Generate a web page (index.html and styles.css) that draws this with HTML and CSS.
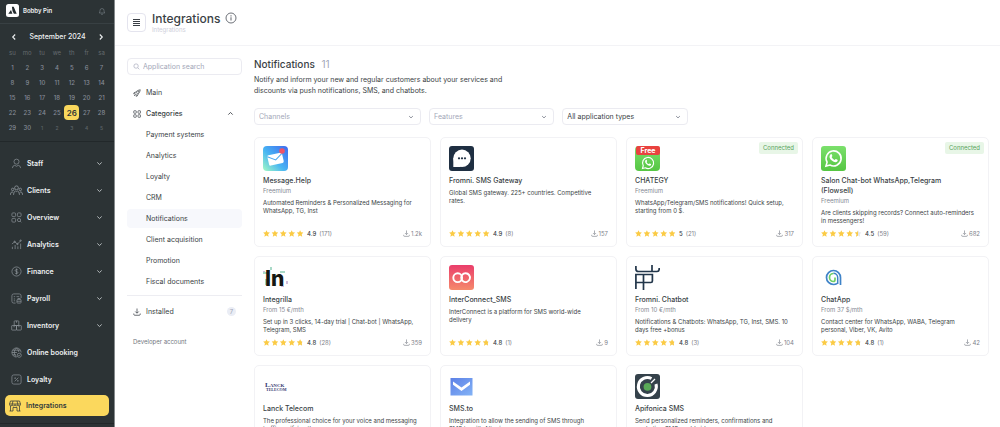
FILE: index.html
```html
<!DOCTYPE html>
<html lang="en">
<head>
<meta charset="utf-8">
<title>Integrations</title>
<link rel="stylesheet" href="styles.css">
</head>
<body>
<svg class="defs" aria-hidden="true">
  <symbol id="star" viewBox="0 0 10 10"><path d="M5 .3 6.4 3.3 9.8 3.7 7.3 6 8 9.5 5 7.8 2 9.5 2.7 6 .2 3.7 3.6 3.3Z"/></symbol>
  <symbol id="stars4" viewBox="0 0 41 7"><g fill="#fbcb45"><use href="#star" width="7" height="7"/><use href="#star" x="8.4" width="7" height="7"/><use href="#star" x="16.8" width="7" height="7"/><use href="#star" x="25.2" width="7" height="7"/></g></symbol>
  <clipPath id="clip48"><rect x="33" width="6.1" height="7"/></clipPath>
  <clipPath id="clip45"><rect x="33" width="4.1" height="7"/></clipPath>
  <symbol id="r50" viewBox="0 0 41 7"><use href="#stars4" width="41" height="7"/><use href="#star" x="33.6" width="7" height="7" fill="#fbcb45"/></symbol>
  <symbol id="r48" viewBox="0 0 41 7"><use href="#stars4" width="41" height="7"/><use href="#star" x="33.6" width="7" height="7" fill="#eceef2"/><g clip-path="url(#clip48)"><use href="#star" x="33.6" width="7" height="7" fill="#fbcb45"/></g></symbol>
  <symbol id="r45" viewBox="0 0 41 7"><use href="#stars4" width="41" height="7"/><use href="#star" x="33.6" width="7" height="7" fill="#e4e6ec"/><g clip-path="url(#clip45)"><use href="#star" x="33.6" width="7" height="7" fill="#fbcb45"/></g></symbol>
  <symbol id="dl" viewBox="0 0 16 16"><path d="M8 1v9M4.5 7 8 10.5 11.500 7M1.500 11v1.500q0 2 2 2h9q2 0 2-2V11" fill="none" stroke="currentColor" stroke-width="1.500"/></symbol>
  <symbol id="down" viewBox="0 0 8 8"><path d="m1.500 2.800 2.500 2.400 2.500-2.400" fill="none" stroke="currentColor" stroke-width="1.100"/></symbol>
  <symbol id="wa" viewBox="0 0 24 24"><path d="M2.500 21.500 3.900 16.600A9.500 9.500 0 1 1 7.500 20.200Z" fill="none" stroke="#fff" stroke-width="2"/><path d="M8.500 6.500c.8-.3 1.200 0 1.400.6l.6 1.500c.2.700-.9 1.500-.8 1.900.7 1.500 1.900 2.600 3.500 3.400.6.200 1.200-1.500 1.900-1.200l1.900.9c.7.400.1 2-.6 2.600-2.200 1.500-5.400-.4-7.300-2.300S5.800 8.700 8.500 6.500Z" fill="#fff"/></symbol>
  <linearGradient id="gWa" x2="0" y2="1"><stop stop-color="#7be06c"/><stop offset="1" stop-color="#56c643"/></linearGradient>
  <linearGradient id="gMsg" x1="0" y1="1" x2="1" y2="0"><stop stop-color="#a4fbc4"/><stop offset=".45" stop-color="#48b5f3"/><stop offset="1" stop-color="#3f68ef"/></linearGradient>
  <linearGradient id="gInter" x2="0" y2="1"><stop stop-color="#ea3d6b"/><stop offset="1" stop-color="#f58a6c"/></linearGradient>
  <linearGradient id="gSms" x2="1" y2="1"><stop stop-color="#5c80e6"/><stop offset="1" stop-color="#83b3f6"/></linearGradient>
</svg>
<div class="app">
  <aside class="sidebar">
    <div class="profile">
      <svg class="logo" viewBox="0 0 13 13"><rect width="13" height="13" rx="2.500" fill="#fff"/><path d="M5.900 2.800h1.800l3 7H7.900L6.500 7Z" fill="#222a2d"/><path d="m5 6 1.400 3.800H2.300Z" fill="#222a2d"/></svg>
      <strong class="profile-name">Bobby Pin</strong>
      <svg class="bell" viewBox="0 0 16 16"><path d="M2.500 12h11q-1.500-1.500-1.500-5a4 4 0 0 0-8 0q0 3.500-1.500 5ZM6 14.500h4" fill="none" stroke="currentColor" stroke-width="1.300"/></svg>
    </div>
    <div class="calendar">
      <div class="month">
        <button aria-label="Previous month"><svg viewBox="0 0 8 8"><path d="M5.200 1.500 2.700 4l2.500 2.500" fill="none" stroke="currentColor" stroke-width="1.100"/></svg></button>
        <span>September 2024</span>
        <button aria-label="Next month"><svg viewBox="0 0 8 8"><path d="M2.800 1.500 5.300 4 2.800 6.500" fill="none" stroke="currentColor" stroke-width="1.100"/></svg></button>
      </div>
      <table class="days">
        <thead><tr><th>su</th><th>mo</th><th>tu</th><th>we</th><th>th</th><th>fr</th><th>sa</th></tr></thead>
        <tbody>
          <tr><td>1</td><td>2</td><td>3</td><td>4</td><td>5</td><td>6</td><td>7</td></tr>
          <tr><td>8</td><td>9</td><td>10</td><td>11</td><td>12</td><td>13</td><td>14</td></tr>
          <tr><td>15</td><td>16</td><td>17</td><td>18</td><td>19</td><td>20</td><td>21</td></tr>
          <tr><td>22</td><td>23</td><td>24</td><td>25</td><td class="today">26</td><td>27</td><td>28</td></tr>
          <tr><td>29</td><td>30</td><td class="other">1</td><td class="other">2</td><td class="other">3</td><td class="other">4</td><td class="other">5</td></tr>
        </tbody>
      </table>
    </div>
    <nav class="nav">
      <a href="#"><svg class="ico" viewBox="0 0 24 24"><circle cx="12" cy="8" r="5.500"/><path d="M3 22q0-5 5-6l4 2 4-2q5 1 5 6"/></svg>Staff<svg class="chev"><use href="#down"/></svg></a>
      <a href="#"><svg class="ico wide" viewBox="0 0 24 24"><circle cx="12" cy="7" r="3.500"/><path d="M6.500 20q0-6 3.500-7l2 1 2-1q3.500 1 3.500 7"/><circle cx="5" cy="10" r="2.300"/><circle cx="19" cy="10" r="2.300"/><path d="M.8 20q0-5 3-5.500l2 1M23.200 20q0-5-3-5.500l-2 1"/></svg>Clients<svg class="chev"><use href="#down"/></svg></a>
      <a href="#"><svg class="ico" viewBox="0 0 24 24"><rect x="2" y="2" width="8" height="8" rx="2"/><rect x="14" y="2" width="8" height="8" rx="2"/><rect x="2" y="14" width="8" height="8" rx="2"/><circle cx="17.500" cy="17.500" r="3.500"/><path d="m20 20 2.500 2.500"/></svg>Overview<svg class="chev"><use href="#down"/></svg></a>
      <a href="#"><svg class="ico" viewBox="0 0 24 24"><path d="M3 22v-5M9 22v-9M15 22v-6M21 22V10M2 11l6-5 6 5 8-8"/><circle cx="8" cy="6" r="1.500"/><circle cx="14" cy="11" r="1.500"/><circle cx="21" cy="3.500" r="1.500"/></svg>Analytics<svg class="chev"><use href="#down"/></svg></a>
      <a href="#"><svg class="ico" viewBox="0 0 24 24"><circle cx="12" cy="12" r="10"/><path d="M15 9q-1-1.500-3-1.500T9 9.700q0 1.800 3 2.300t3 2.300q0 2.200-3 2.200T9 15M12 5.500v13"/></svg>Finance<svg class="chev"><use href="#down"/></svg></a>
      <a href="#"><svg class="ico" viewBox="0 0 24 24"><path d="M10 22H6q-4 0-4-4V6q0-4 4-4h12q4 0 4 4v5M6 8h3M12 8h6M6 13h3M6 17h3"/><rect x="13" y="14" width="9" height="8" rx="1.500"/><path d="M15 14v-2h5v2M13 18h9"/></svg>Payroll<svg class="chev"><use href="#down"/></svg></a>
      <a href="#"><svg class="ico" viewBox="0 0 24 24"><rect x="7" y="2" width="10" height="10" rx="1"/><rect x="1.500" y="12" width="10.500" height="10" rx="1"/><rect x="12" y="12" width="10.500" height="10" rx="1"/><path d="M12 2v4M6.700 12v4M17.300 12v4"/></svg>Inventory<svg class="chev"><use href="#down"/></svg></a>
      <a href="#"><svg class="ico" viewBox="0 0 24 24"><path d="M12 22A10 10 0 1 1 22 12M12 22Q7 18 7 12t5-10q5 4 5 9M2 12h11M3.500 7h17M3.500 17H11"/><circle cx="18" cy="18" r="4.500"/><path d="m16 18 1.500 1.500 2.500-3"/></svg>Online booking</a>
      <a href="#"><svg class="ico" viewBox="0 0 24 24"><rect x="2" y="2" width="20" height="20" rx="4"/><path d="m8 16 8-8"/><circle cx="9" cy="9" r="1"/><circle cx="15" cy="15" r="1"/></svg>Loyalty</a>
      <a href="#" class="active" aria-current="page"><svg class="ico" viewBox="0 0 24 24"><path d="M3 2h18l2 6v1a2.700 2.700 0 0 1-5.500 0 2.700 2.700 0 0 1-5.500 0 2.700 2.700 0 0 1-5.500 0A2.700 2.700 0 0 1 1 9V8ZM1 8h22M8 2 6.500 8M16 2l1.500 6M3 12v10M21 12v10M8 22v-7h8v7M1 22h7M16 22h7"/></svg>Integrations</a>
    </nav>
    <div class="sidebar-end"></div>
  </aside>
  <main class="main">
    <header class="topbar">
      <button class="menu" aria-label="Menu"><svg viewBox="0 0 9 9"><path d="M1 1.500h7M1 3.500h7M1 5.500h7M1 7.500h7" stroke="currentColor" stroke-width="1"/></svg></button>
      <div class="titles">
        <div class="title-line"><h1>Integrations</h1><svg class="info" viewBox="0 0 12 12"><circle cx="6" cy="6" r="5" fill="none" stroke="currentColor"/><path d="M6 5.300v3.200M6 3.200v1.200" stroke="currentColor" stroke-width="1.100"/></svg></div>
        <span class="crumb">Integrations</span>
      </div>
    </header>
    <div class="body">
      <section class="side">
        <label class="search"><svg viewBox="0 0 16 16"><circle cx="7" cy="7" r="5" fill="none" stroke="currentColor" stroke-width="1.500"/><path d="m11 11 3.500 3.500" stroke="currentColor" stroke-width="1.500"/></svg><input type="text" placeholder="Application search" aria-label="Application search"></label>
        <nav class="cats">
          <a href="#"><svg class="cico" viewBox="0 0 16 16"><path d="M14.500 1.500Q9 2 5.500 6L2 7.500 1.500 10l3-.5 2 2-.5 3 2.500-.5L10 10.500q4-3.500 4.500-9ZM5.500 6l4.500 4.500M2 14l3-3"/><circle cx="10.500" cy="5.500" r="1"/></svg>Main</a>
          <a href="#" class="group"><svg class="cico" viewBox="0 0 16 16"><rect x="1.500" y="1.500" width="5" height="5" rx="1"/><rect x="10" y="1.500" width="5" height="5" rx="1"/><rect x="1.500" y="9.500" width="5" height="5" rx="1"/><rect x="10" y="9.500" width="5" height="5" rx="1"/></svg>Categories<svg class="up" viewBox="0 0 8 8"><path d="m1.500 5.300 2.500-2.500 2.500 2.500" fill="none" stroke="currentColor"/></svg></a>
          <a href="#" class="sub">Payment systems</a>
          <a href="#" class="sub">Analytics</a>
          <a href="#" class="sub">Loyalty</a>
          <a href="#" class="sub">CRM</a>
          <a href="#" class="sub current">Notifications</a>
          <a href="#" class="sub">Client acquisition</a>
          <a href="#" class="sub">Promotion</a>
          <a href="#" class="sub">Fiscal documents</a>
        </nav>
        <div class="installed"><a href="#"><svg class="cico"><use href="#dl"/></svg>Installed<span class="count">7</span></a></div>
        <a href="#" class="dev">Developer account</a>
      </section>
      <section class="content">
        <h2>Notifications <span>11</span></h2>
        <p class="intro">Notify and inform your new and regular customers about your services and discounts via push notifications, SMS, and chatbots.</p>
        <div class="filters">
          <div class="filter"><select aria-label="Channels"><option>Channels</option></select><svg><use href="#down"/></svg></div>
          <div class="filter"><select aria-label="Features"><option>Features</option></select><svg><use href="#down"/></svg></div>
          <div class="filter chosen"><select aria-label="Application type"><option>All application types</option></select><svg><use href="#down"/></svg></div>
        </div>
        <div class="cards">
          <article class="card">
            <svg class="app-icon" viewBox="0 0 25 25"><rect width="25" height="25" rx="4" fill="url(#gMsg)"/><g transform="rotate(-13 12 13)"><rect x="5" y="8" width="15" height="10.500" rx="1.500" fill="#fff"/><path d="m5 9 7.500 5L20 9" fill="none" stroke="#4ea9ee" stroke-width="1"/></g><circle cx="19" cy="5" r="2.800" fill="#f05267"/></svg>
            <h3>Message.Help</h3><p class="price">Freemium</p>
            <p class="desc">Automated Reminders &amp; Personalized Messaging for WhatsApp, TG, Inst</p>
            <div class="meta"><svg class="stars"><use href="#r50"/></svg><b>4.9</b><span>(171)</span><span class="installs"><svg><use href="#dl"/></svg>1.2k</span></div>
          </article>
          <article class="card">
            <svg class="app-icon" viewBox="0 0 25 25"><rect width="25" height="25" rx="3" fill="#1f2f42"/><circle cx="13" cy="12.300" r="8.700" fill="#fff"/><path d="M4.300 12v9H12Z" fill="#fff"/><g fill="#1f2f42"><circle cx="10" cy="12.300" r="1.100"/><circle cx="13" cy="12.300" r="1.100"/><circle cx="16" cy="12.300" r="1.100"/></g></svg>
            <h3>Fromni. SMS Gateway</h3>
            <p class="desc">Global SMS gateway. 225+ countries. Competitive rates.</p>
            <div class="meta"><svg class="stars"><use href="#r50"/></svg><b>4.9</b><span>(8)</span><span class="installs"><svg><use href="#dl"/></svg>157</span></div>
          </article>
          <article class="card">
            <span class="badge">Connected</span>
            <svg class="app-icon" viewBox="0 0 25 25"><rect width="25" height="25" rx="4" fill="url(#gWa)"/><rect x="1" y="0" width="24" height="9" rx="2" fill="#e9423f"/><text class="free" x="13" y="7" text-anchor="middle">Free</text><use href="#wa" x="6" y="10" width="14" height="14"/></svg>
            <h3>CHATEGY</h3><p class="price">Freemium</p>
            <p class="desc">WhatsApp/Telegram/SMS notifications! Quick setup, starting from 0 $.</p>
            <div class="meta"><svg class="stars"><use href="#r50"/></svg><b>5</b><span>(21)</span><span class="installs"><svg><use href="#dl"/></svg>317</span></div>
          </article>
          <article class="card">
            <span class="badge">Connected</span>
            <svg class="app-icon" viewBox="0 0 25 25"><rect width="25" height="25" rx="3" fill="url(#gWa)"/><use href="#wa" x="3" y="3" width="19" height="19"/></svg>
            <h3>Salon Chat-bot WhatsApp,Telegram (Flowsell)</h3><p class="price">Freemium</p>
            <p class="desc">Are clients skipping records? Connect auto-reminders in messengers!</p>
            <div class="meta"><svg class="stars"><use href="#r45"/></svg><b>4.5</b><span>(59)</span><span class="installs"><svg><use href="#dl"/></svg>682</span></div>
          </article>
          <article class="card">
            <svg class="app-icon" viewBox="0 0 25 25"><path d="M0 7h4v2H0ZM7 2h2v3H7ZM2 14h2v6H2ZM17 6h5v2h-5ZM10 18h3v3h-3Z" fill="#a8d9c7"/><path d="M0 6h2v1H0ZM18 21h3v1h-3ZM23 16h2v3h-2Z" fill="#d0bedc"/><text class="in-mark" x="2" y="21">In</text></svg>
            <h3>Integrilla</h3><p class="price">From 15 €/mth</p>
            <p class="desc">Set up in 3 clicks, 14-day trial | Chat-bot | WhatsApp, Telegram, SMS</p>
            <div class="meta"><svg class="stars"><use href="#r48"/></svg><b>4.8</b><span>(28)</span><span class="installs"><svg><use href="#dl"/></svg>359</span></div>
          </article>
          <article class="card">
            <svg class="app-icon" viewBox="0 0 25 25"><rect width="25" height="25" rx="3" fill="url(#gInter)"/><g fill="none" stroke="#fff" stroke-width="1.900"><circle cx="8.700" cy="12.700" r="4.400"/><path d="M13.100 10a4.400 4.400 0 1 1-.9 2.700q0-2 1.500-3.300"/></g></svg>
            <h3>InterConnect_SMS</h3>
            <p class="desc">InterConnect is a platform for SMS world-wide delivery</p>
            <div class="meta"><svg class="stars"><use href="#r48"/></svg><b>4.8</b><span>(1)</span><span class="installs"><svg><use href="#dl"/></svg>9</span></div>
          </article>
          <article class="card">
            <svg class="app-icon" viewBox="0 0 25 25"><g fill="none" stroke="#22364a" stroke-width="1.700"><path d="M.9 1v3q0 2.500 2.500 2.500H22q2.200 0 2.200-2.500V3M17 0v6.500M.9 24V9.500h16.500V16q0 1.500-1.500 1.500H.9M8.500 9.500V25"/></g></svg>
            <h3>Fromni. Chatbot</h3><p class="price">From 10 €/mth</p>
            <p class="desc">Notifications &amp; Chatbots: WhatsApp, TG, Inst, SMS. 10 days free +bonus</p>
            <div class="meta"><svg class="stars"><use href="#r48"/></svg><b>4.8</b><span>(3)</span><span class="installs"><svg><use href="#dl"/></svg>104</span></div>
          </article>
          <article class="card">
            <svg class="app-icon" viewBox="0 0 25 25"><path d="M19.500 20v-7.500a7 7 0 1 0-7 7q2 0 3.500-1" fill="none" stroke="#3f83c8" stroke-width="1.700"/><path d="M16.700 19v-6.500a4.300 4.300 0 0 0-4.300-4.300" fill="none" stroke="#3f83c8" stroke-width="1.500"/><path d="M12.500 8.500a4 4 0 1 0 0 8q1.500 0 1.500-2v-2" fill="none" stroke="#70cf67" stroke-width="1.700"/></svg>
            <h3>ChatApp</h3><p class="price">From 37 $/mth</p>
            <p class="desc">Contact center for WhatsApp, WABA, Telegram personal, Viber, VK, Avito</p>
            <div class="meta"><svg class="stars"><use href="#r48"/></svg><b>4.8</b><span>(1)</span><span class="installs"><svg><use href="#dl"/></svg>42</span></div>
          </article>
          <article class="card">
            <svg class="app-icon" viewBox="0 0 25 25"><text class="lanck" x="2" y="13">L<tspan class="lanck-small">ANCK</tspan></text><text class="telecom" x="3" y="17">TELECOM</text></svg>
            <h3>Lanck Telecom</h3>
            <p class="desc">The professional choice for your voice and messaging traffic, unifying the...</p>
          </article>
          <article class="card">
            <svg class="app-icon" viewBox="0 0 25 25"><rect x="1.500" y="4" width="22" height="17.500" fill="url(#gSms)"/><path d="m4 7.500 8.500 6 8.500-6v3.200l-8.500 6.300L4 10.700Z" fill="#fff"/></svg>
            <h3>SMS.to</h3>
            <p class="desc">Integration to allow the sending of SMS through SMS.to with Altegio</p>
          </article>
          <article class="card">
            <svg class="app-icon" viewBox="0 0 25 25"><rect width="25" height="25" rx="3" fill="#35424b"/><path d="M16.500 4.500A9 9 0 1 0 21 10" fill="none" stroke="#fff" stroke-width="3"/><path d="m16 9 4-4" stroke="#fff" stroke-width="1.200"/><circle cx="12.500" cy="12.800" r="3.900" fill="#59a957"/></svg>
            <h3>Apifonica SMS</h3>
            <p class="desc">Send personalized reminders, confirmations and marketing SMS worldwide</p>
          </article>
        </div>
      </section>
    </div>
  </main>
</div>
</body>
</html>
```

FILE: styles.css
```css
* { box-sizing: border-box; }
body, h1, h2, h3, p { margin: 0; }
body { font: 7px/10px Inter, sans-serif; color: #3a3f45; background: #fff; }
a { color: inherit; text-decoration: none; }
button, input, select { font: inherit; color: inherit; margin: 0; padding: 0; border: 0; background: none; }
svg { display: block; flex: none; }
.defs { position: absolute; width: 0; height: 0; }
.app { display: flex; height: 100vh; overflow: hidden; }

.sidebar { width: 115px; flex: none; background: #2c3335; color: #eef0f1; border-right: 1px solid #858a8c; }
.profile { display: flex; align-items: center; gap: 4px; height: 24px; padding: 0 8px 2px 6px; border-bottom: 1px solid #384043; }
.logo { width: 13px; height: 13px; }
.profile-name { font-size: 6px; font-weight: 600; }
.bell { width: 8px; height: 8px; margin-left: auto; color: #747b82; }
.calendar { padding: 7px 5px 0; border-bottom: 1px solid #22282a; height: 118px; }
.month { display: flex; justify-content: space-between; align-items: center; height: 12px; padding: 0 4px 0 5px; font-weight: 500; }
.month svg { width: 8px; height: 8px; }
.days { width: 100%; table-layout: fixed; border-collapse: collapse; text-align: center; font-size: 6px; line-height: 8px; font-weight: 500; color: #858b97; margin-top: 3px; }
.days th { height: 14px; padding: 0; font-weight: 400; color: #656c70; }
.days td { height: 15px; padding: 0; }
.days .other { font-size: 5px; color: #5c6368; }
.days .today { background: #f9d75c; color: #2d3335; border-radius: 4px; font-size: 8px; font-weight: 600; }
.nav { padding: 8px 5px 7px; font-weight: 600; }
.nav a { display: flex; align-items: center; gap: 5px; height: 27px; padding: 0 6px; }
.nav .active { height: 21px; margin-top: 2px; padding: 0 4px; background: #fbd85d; color: #333a3b; border-radius: 5px; }
.ico { width: 11px; height: 11px; fill: none; stroke: #8f969c; stroke-width: 1.5; }
.nav .wide { width: 13px; height: 13px; margin: 0 -1px; }
.active .ico { width: 12px; height: 12px; stroke: #333a3b; }
.chev { width: 7px; height: 7px; margin-left: auto; color: #b9bec1; }
.sidebar-end { border-top: 1px solid #22282a; }

.main { flex: 1; min-width: 0; }
.topbar { display: flex; align-items: center; gap: 6px; height: 46px; padding: 0 12px 1px; border-bottom: 1px solid #f3f3f6; }
.menu { display: grid; place-items: center; width: 19px; height: 19px; border: 1px solid #e4e4ee; border-radius: 4px; }
.menu svg { width: 9px; height: 9px; }
.title-line { display: flex; align-items: center; gap: 5px; }
h1 { font-size: 12px; line-height: 15px; font-weight: 500; }
.info { width: 12px; height: 12px; color: #6d7178; }
.crumb { display: block; font-size: 6px; line-height: 8px; color: #cdced9; }
.body { display: flex; gap: 12px; padding: 12px 11px 0 12px; }
.side { width: 115px; flex: none; }
.search { display: flex; align-items: center; gap: 3px; height: 17px; padding: 0 5px; border: 1px solid #ebebf1; border-radius: 4px; color: #a3a7b8; }
.search svg { width: 7px; height: 7px; }
.search input { flex: 1; min-width: 0; outline: 0; }
.search input::placeholder { color: #a3a7b8; opacity: 1; }
.cats { margin-top: 7px; }
.cats a, .installed a { display: flex; align-items: center; gap: 5px; height: 21px; padding: 0 6px; }
.cats .group { font-weight: 500; }
.cats .sub { padding-left: 19px; }
.cats .current { height: 19px; margin: 1px 0; background: #f7f8fc; border-radius: 4px; }
.cico { width: 8px; height: 8px; fill: none; stroke: currentColor; stroke-width: 1.4; }
.up { width: 7px; height: 7px; margin: 0 2px 0 auto; }
.installed { margin-top: 3px; padding-top: 5px; border-top: 1px solid #ededf2; }
.count { margin-left: auto; width: 9px; height: 9px; border-radius: 50%; background: #eaedf5; color: #9ea4b4; font-size: 6px; line-height: 9px; text-align: center; }
.dev { display: block; margin: 15px 0 0 6px; font-size: 6px; color: #72767e; }

.content { flex: 1; min-width: 0; }
h2 { font-size: 10px; line-height: 12px; font-weight: 500; }
h2 span { color: #a3a7b8; font-weight: 400; margin-left: 4px; }
.intro { width: 36%; min-width: 265px; margin-top: 4px; line-height: 11px; }
.filters { display: grid; grid-template-columns: 4fr 3fr 3fr; gap: 8px; width: 59%; margin-top: 12px; }
.filter { display: flex; align-items: center; height: 17px; padding: 0 6px 0 4px; border: 1px solid #ebebf1; border-radius: 4px; color: #a3a7b8; }
.filter select { flex: 1; min-width: 0; appearance: none; outline: 0; }
.filter svg { width: 6px; height: 6px; color: #777c88; }
.chosen { color: #3a3f45; }
.cards { display: grid; grid-template-columns: repeat(4, minmax(0, 1fr)); gap: 9px; margin-top: 12px; }
.card { position: relative; display: flex; flex-direction: column; padding: 8px; border: 1px solid #f2f2f5; border-radius: 5px; font-size: 6px; line-height: 8px; }
.app-icon { width: 25px; height: 25px; margin-bottom: 5px; }
h3 { max-width: 90%; font-size: 7px; line-height: 10px; font-weight: 500; }
.price { line-height: 10px; color: #858993; }
.desc { margin-top: 3px; padding-right: 4px; }
.meta { display: flex; align-items: center; gap: 3px; margin-top: auto; padding-top: 4px; line-height: 9px; color: #7f838c; }
.meta b { font-weight: 500; color: #3a3f45; }
.stars { width: 41px; height: 7px; }
.installs { display: flex; align-items: center; gap: 1px; margin-left: auto; }
.installs svg { width: 7px; height: 7px; }
.badge { position: absolute; top: 4px; right: 4px; padding: 2px 4px; line-height: 8px; background: #e8f6e7; color: #59a35e; border-radius: 2px; }
.free { font: 700 7px Inter, sans-serif; fill: #fff; }
.in-mark { font: 800 21px Inter, sans-serif; fill: #151713; }
.lanck { font: 700 7px "Liberation Serif", serif; fill: #34386f; }
.lanck-small { font-size: 5px; }
.telecom { font: 700 4px "Liberation Serif", serif; fill: #34386f; }
```
